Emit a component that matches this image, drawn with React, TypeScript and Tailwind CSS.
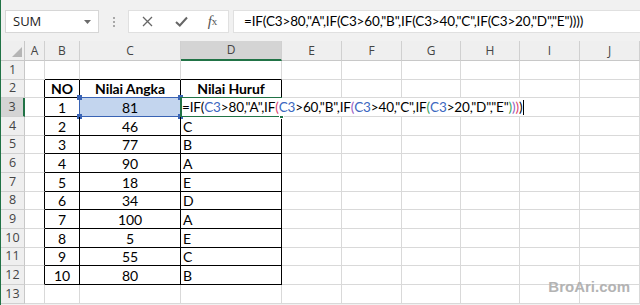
import React from 'react';

const COLS = ['A', 'B', 'C', 'D', 'E', 'F', 'G', 'H', 'I', 'J'];

type Row = { no: string; angka: string; huruf: string };

const DATA: Row[] = [
  { no: '1', angka: '81', huruf: '' },
  { no: '2', angka: '46', huruf: 'C' },
  { no: '3', angka: '77', huruf: 'B' },
  { no: '4', angka: '90', huruf: 'A' },
  { no: '5', angka: '18', huruf: 'E' },
  { no: '6', angka: '34', huruf: 'D' },
  { no: '7', angka: '100', huruf: 'A' },
  { no: '8', angka: '5', huruf: 'E' },
  { no: '9', angka: '55', huruf: 'C' },
  { no: '10', angka: '80', huruf: 'B' },
];

const FORMULA = '=IF(C3>80,"A",IF(C3>60,"B",IF(C3>40,"C",IF(C3>20,"D","E"))))';

// potongan formula berwarna seperti mode edit Excel
const PARTS: Array<[string, string]> = [
  ['=IF(', 'text-black'],
  ['C3', 'text-[#3c68c0]'],
  ['>80,"A",IF', 'text-black'],
  ['(', 'text-[#dd3e6c]'],
  ['C3', 'text-[#3c68c0]'],
  ['>60,"B",IF', 'text-black'],
  ['(', 'text-[#9a5cc4]'],
  ['C3', 'text-[#3c68c0]'],
  ['>40,"C",IF', 'text-black'],
  ['(', 'text-[#35a15a]'],
  ['C3', 'text-[#3c68c0]'],
  ['>20,"D","E"', 'text-black'],
  [')', 'text-[#35a15a]'],
  [')', 'text-[#9a5cc4]'],
  [')', 'text-[#dd3e6c]'],
  [')', 'text-black'],
];

const CELL_FONT = { fontFamily: 'Lato, "Open Sans", sans-serif' };
const UI_FONT = { fontFamily: '"Segoe UI", "Open Sans", sans-serif' };

function cellValue(r: number, c: string): { text: string; cls: string } {
  if (r === 2) {
    if (c === 'B') return { text: 'NO', cls: 'justify-center font-bold' };
    if (c === 'C') return { text: 'Nilai Angka', cls: 'justify-center font-bold' };
    if (c === 'D') return { text: 'Nilai Huruf', cls: 'justify-center font-bold' };
  }
  if (r >= 3 && r <= 12) {
    const d = DATA[r - 3];
    if (c === 'B') return { text: d.no, cls: 'justify-center' };
    if (c === 'C') return { text: d.angka, cls: 'justify-center' };
    if (c === 'D') return { text: d.huruf, cls: 'justify-start pl-[2px]' };
  }
  return { text: '', cls: '' };
}

function Cell({ r, c }: { r: number; c: string }) {
  const inTable = ['B', 'C', 'D'].includes(c);
  const rightBlack = (c === 'A' || inTable) && r >= 2 && r <= 12;
  const bottomBlack = inTable && r >= 1 && r <= 12;
  const v = cellValue(r, c);
  const isC3 = r === 3 && c === 'C';
  const isD3 = r === 3 && c === 'D';
  return (
    <div
      className={`relative flex items-center border-r border-b text-[14px] tracking-[-0.1px] text-black whitespace-nowrap ${
        rightBlack ? 'border-r-black' : 'border-r-[#d9d9d9]'
      } ${bottomBlack ? 'border-b-black' : 'border-b-[#d9d9d9]'} ${isC3 ? 'bg-[#c3d5ee]' : ''} ${v.cls}`}
      style={CELL_FONT}
    >
      {v.text}
      {isC3 && (
        <div className="absolute -left-px -top-px -right-px -bottom-px border border-[#3963b4] pointer-events-none">
          <span className="absolute -left-[3px] -top-[3px] w-[5px] h-[5px] bg-[#3963b4]" />
          <span className="absolute -right-[3px] -top-[3px] w-[5px] h-[5px] bg-[#3963b4]" />
          <span className="absolute -left-[3px] -bottom-[3px] w-[5px] h-[5px] bg-[#3963b4]" />
          <span className="absolute -right-[3px] -bottom-[3px] w-[5px] h-[5px] bg-[#3963b4]" />
        </div>
      )}
      {isD3 && (
        <>
          <div className="absolute -left-px -top-px -right-px -bottom-px border-2 border-[#217346] z-10 pointer-events-none">
            <span className="absolute -right-[4px] -bottom-[4px] w-[5px] h-[5px] bg-[#217346] border border-white" />
          </div>
          <div className="absolute left-[1px] top-0 bottom-0 flex items-center bg-white z-20 pr-[2px] text-[13.5px] tracking-[-0.15px]">
            {PARTS.map(([t, cls], i) => (
              <span key={i} className={cls}>
                {t}
              </span>
            ))}
            <span className="ml-[1px] w-px h-[15px] bg-black" />
          </div>
        </>
      )}
    </div>
  );
}

export default function App() {
  const rows = Array.from({ length: 13 }, (_, i) => i + 1);
  return (
    <div className="relative w-[640px] h-[305px] overflow-hidden bg-[#f1f1f1] flex">
      <div className="w-px h-full bg-[#217346]" />
      <div className="flex-1 flex flex-col">
        {/* formula bar */}
        <div className="h-[41px] flex items-start pt-[10px] text-[#222]">
          <div
            className="ml-[4px] w-[94px] h-[23px] bg-white border border-[#d6d6d6] flex items-center justify-between pl-[7px] pr-[7px] text-[13px]"
            style={UI_FONT}
          >
            <span>SUM</span>
            <svg width="7" height="4" viewBox="0 0 7 4">
              <path d="M0 0 L7 0 L3.5 4 Z" fill="#6b6b6b" />
            </svg>
          </div>
          <div className="w-[29px] h-[23px] flex flex-col items-center justify-center gap-[2px]">
            <span className="w-[2px] h-[2px] bg-[#a8a8a8]" />
            <span className="w-[2px] h-[2px] bg-[#a8a8a8]" />
            <span className="w-[2px] h-[2px] bg-[#a8a8a8]" />
          </div>
          <div className="w-[101px] h-[23px] bg-white border border-[#e0e0e0] flex items-center">
            <div className="w-[37px] flex justify-center">
              <svg width="11" height="11" viewBox="0 0 11 11">
                <path d="M1 1 L10 10 M10 1 L1 10" stroke="#666" strokeWidth="1.3" />
              </svg>
            </div>
            <div className="w-[31px] flex justify-center">
              <svg width="13" height="11" viewBox="0 0 13 11">
                <path d="M1 6 L4.8 9.5 L12 1.5" stroke="#666" strokeWidth="2" fill="none" />
              </svg>
            </div>
            <div
              className="w-[31px] flex justify-center italic text-[15px] text-[#555] leading-none"
              style={{ fontFamily: '"Liberation Serif", serif' }}
            >
              f<span className="text-[11px] not-italic relative top-[2px]">x</span>
            </div>
          </div>
          <div
            className="ml-[4px] flex-1 h-[23px] bg-white border border-[#e0e0e0] border-r-0 flex items-center pl-[10px] text-[13.5px] tracking-[-0.15px] text-black whitespace-nowrap"
            style={CELL_FONT}
          >
            {FORMULA}
          </div>
        </div>

        {/* grid */}
        <div className="grid grid-cols-[24px_20px_35px_101px_101px_60px_60px_59px_59px_60px_60px] grid-rows-[20px_19px_18px_19px_19px_18px_19px_19px_18px_19px_19px_18px_19px_19px] bg-white">
          {/* corner */}
          <div className="relative bg-[#efefef] border-r border-b border-[#c8c8c8]">
            <svg className="absolute right-[2px] bottom-[3px]" width="10" height="10" viewBox="0 0 10 10">
              <path d="M10 0 L10 10 L0 10 Z" fill="#b5b5b5" />
            </svg>
          </div>
          {COLS.map((c) => (
            <div
              key={c}
              className={`flex items-center justify-center text-[12px] text-[#444] border-r border-r-[#d0d0d0] ${
                c === 'D' ? 'bg-[#d4d4d4] border-b-2 border-b-[#217346]' : 'bg-[#efefef] border-b border-b-[#c8c8c8]'
              }`}
              style={UI_FONT}
            >
              {c}
            </div>
          ))}
          {rows.map((r) => (
            <React.Fragment key={r}>
              <div
                className={`flex items-center justify-center text-[12.5px] text-[#444] border-b border-b-[#d0d0d0] ${
                  r === 3 ? 'bg-[#d4d4d4] border-r-2 border-r-[#217346]' : 'bg-[#efefef] border-r border-r-[#c8c8c8]'
                }`}
                style={UI_FONT}
              >
                {r}
              </div>
              {COLS.map((c) => (
                <Cell key={c} r={r} c={c} />
              ))}
            </React.Fragment>
          ))}
        </div>
      </div>

      {/* watermark */}
      <div
        className="absolute right-[10px] bottom-[7px] text-[15px] font-bold text-[#b3b3b3] z-30"
        style={{ fontFamily: '"Liberation Sans", Arial, sans-serif' }}
      >
        BroAri.com
      </div>
    </div>
  );
}
